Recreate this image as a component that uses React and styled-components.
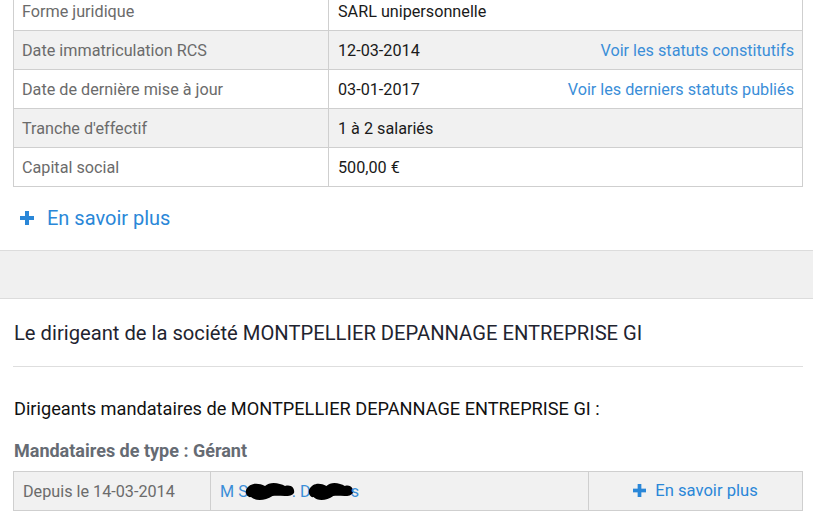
import React from 'react';
import styled, { createGlobalStyle } from 'styled-components';

const Global = createGlobalStyle`
  body {
    margin: 0;
    background: #fff;
    font-family: Roboto, "Liberation Sans", Arial, sans-serif;
    overflow: hidden;
  }
`;

const Page = styled.div`
  width: 813px;
  height: 511px;
  overflow: hidden;
`;

const Section = styled.div`
  padding: 0 10px 0 13px;
`;

const InfoTable = styled.table`
  width: 100%;
  border-collapse: collapse;
  margin-top: -9px;
  font-size: 16.2px;
`;

const Row = styled.tr`
  background: ${p => (p.$alt ? '#f1f1f1' : '#fff')};
  height: 39px;
`;

const Label = styled.td`
  width: 298px;
  border: 1px solid #cfcfcf;
  padding: 0 8px;
  color: #6b6b6b;
`;

const Value = styled.td`
  border: 1px solid #cfcfcf;
  padding: 0 8px 0 9px;
  color: #1a1a1a;
`;

const ValueInner = styled.div`
  display: flex;
  justify-content: space-between;
  align-items: center;
`;

const Link = styled.a`
  color: #3b8ed8;
  text-decoration: none;
`;

const MoreLink = styled.a`
  display: flex;
  align-items: center;
  gap: 13px;
  padding: 18px 0 0 7px;
  height: 44px;
  box-sizing: border-box;
  color: #2a87d8;
  font-size: 20px;
  text-decoration: none;
`;

const PlusIcon = ({ size = 14 }) => (
  <svg width={size} height={size} viewBox="0 0 14 14">
    <rect x="5" y="0" width="4" height="14" fill="currentColor" />
    <rect x="0" y="5" width="14" height="4" fill="currentColor" />
  </svg>
);

const Band = styled.div`
  margin-top: 19px;
  height: 47px;
  background: #f0f0f0;
  border-top: 1px solid #dcdcdc;
  border-bottom: 1px solid #dcdcdc;
`;

const Title = styled.h2`
  margin: 0;
  padding: 22px 0 0 1px;
  height: 68px;
  box-sizing: border-box;
  font-size: 20.2px;
  font-weight: 400;
  color: #1f2430;
  border-bottom: 1px solid #dedede;
`;

const Intro = styled.p`
  margin: 0;
  padding: 31px 0 0 1px;
  font-size: 18.2px;
  color: #111;
  line-height: 21px;
`;

const SubTitle = styled.h3`
  margin: 0;
  padding: 21px 0 0 1px;
  font-size: 18px;
  font-weight: 700;
  color: #666b73;
  line-height: 21px;
`;

const MandateTable = styled.table`
  width: 100%;
  border-collapse: collapse;
  margin-top: 10px;
  font-size: 16.2px;
  background: #f1f1f1;
`;

const Cell = styled.td`
  height: 38px;
  border: 1px solid #cfcfcf;
  padding: 0 9px;
  width: ${p => p.$w}px;
  color: ${p => p.$color || '#6b6b6b'};
  text-align: ${p => p.$align || 'left'};
`;

const Name = styled.span`
  display: inline-flex;
  align-items: center;
  color: #3b8ed8;
`;

const Scribble = ({ w }) => (
  <svg width={w} height="22" viewBox={`0 0 ${w} 22`} style={{ margin: '0 -3px' }}>
    <path
      d={`M1 10 C4 3 ${w * 0.25} 2 ${w * 0.4} 6 C${w * 0.5} 1 ${w * 0.7} 3 ${w * 0.8} 6 C${w - 3} 4 ${w} 9 ${w - 1} 13 C${w - 4} 18 ${w * 0.7} 15 ${w * 0.55} 16 C${w * 0.4} 21 ${w * 0.2} 21 ${w * 0.12} 17 C3 18 0 14 1 10 Z`}
      fill="#000"
    />
  </svg>
);

const InlineMore = styled.span`
  display: inline-flex;
  align-items: center;
  gap: 9px;
  color: #2a87d8;
  font-size: 16.6px;
`;

const rows = [
  ['Forme juridique', 'SARL unipersonnelle'],
  ['Date immatriculation RCS', '12-03-2014', 'Voir les statuts constitutifs'],
  ['Date de dernière mise à jour', '03-01-2017', 'Voir les derniers statuts publiés'],
  ["Tranche d'effectif", '1 à 2 salariés'],
  ['Capital social', '500,00 €'],
];

export default function App() {
  return (
    <Page>
      <Global />
      <Section>
        <InfoTable>
          <tbody>
            {rows.map(([label, value, link], i) => (
              <Row key={label} $alt={i % 2 === 1}>
                <Label>{label}</Label>
                <Value>
                  <ValueInner>
                    <span>{value}</span>
                    {link && <Link href="#">{link}</Link>}
                  </ValueInner>
                </Value>
              </Row>
            ))}
          </tbody>
        </InfoTable>
        <MoreLink href="#">
          <PlusIcon />
          En savoir plus
        </MoreLink>
      </Section>
      <Band />
      <Section>
        <Title>Le dirigeant de la société MONTPELLIER DEPANNAGE ENTREPRISE GI</Title>
        <Intro>Dirigeants mandataires de MONTPELLIER DEPANNAGE ENTREPRISE GI :</Intro>
        <SubTitle>Mandataires de type : Gérant</SubTitle>
        <MandateTable>
          <tbody>
            <tr>
              <Cell $w={178}>Depuis le 14-03-2014</Cell>
              <Cell $w={359}>
                <Name>
                  M S<Scribble w={50} />. D<Scribble w={46} />s
                </Name>
              </Cell>
              <Cell $align="center">
                <InlineMore>
                  <PlusIcon size={13} />
                  En savoir plus
                </InlineMore>
              </Cell>
            </tr>
          </tbody>
        </MandateTable>
      </Section>
    </Page>
  );
}
